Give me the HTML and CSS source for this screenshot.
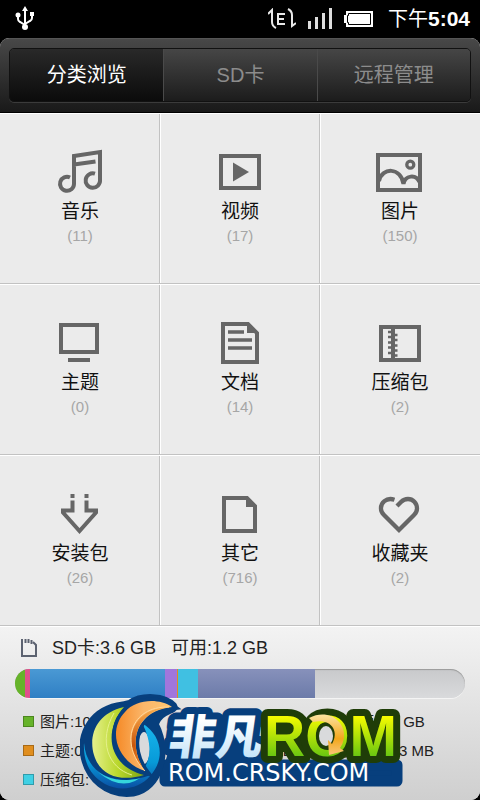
FILE: index.html
```html
<!DOCTYPE html>
<html lang="zh-CN">
<head>
<meta charset="utf-8">
<meta name="viewport" content="width=device-width, initial-scale=1">
<title>文件管理</title>
<link rel="stylesheet" href="styles.css">
</head>
<body>
<div class="status">
  <svg class="usb" width="20" height="26" viewBox="0 0 20 26" fill="none" stroke="#fff" stroke-width="2">
    <path d="M10 4V22M3 10V13Q3 15 5 16L10 19M17 9V12Q17 14 15 15L10 18"/>
    <path d="M10 0L13 5H7ZM15 6h4v4h-4Z" fill="#fff" stroke="none"/>
    <circle cx="3" cy="9" r="2.500" fill="#fff" stroke="none"/><circle cx="10" cy="21" r="3" fill="#fff" stroke="none"/>
  </svg>
  <div class="indicators">
    <svg width="28" height="22" viewBox="0 0 28 22" fill="none" stroke="#e8e8e8" stroke-width="2">
      <path d="M0 6L4 2V14Q4 18 8 20M20 1Q24 3 24 7V18L28 15"/><path d="M17 6H10V16H17M10 11H16"/>
    </svg>
    <svg class="signal" width="24" height="22" viewBox="0 0 24 22" fill="#ddd">
      <path d="M0 13h3v8H0ZM7 9h3v12H7ZM14 5h3v16h-3ZM21 0h3v21h-3Z"/>
    </svg>
    <svg class="battery" width="29" height="18" viewBox="0 0 29 18">
      <path d="M2 1H29V17H2V13H0V5H2Z" fill="#fff"/><path d="M4.500 3.500H26.500V14.500H4.500V12.500H3.500V5.500H4.500Z" fill="#fff" stroke="#000"/>
    </svg>
    <span class="clock">下午<b>5:04</b></span>
  </div>
</div>

<main class="screen">
  <nav class="top">
    <div class="tabs">
      <button class="tab active" type="button">分类浏览</button>
      <button class="tab" type="button">SD卡</button>
      <button class="tab" type="button">远程管理</button>
    </div>
  </nav>

  <section class="grid">
    <a class="cell" href="#music">
      <svg class="icon" viewBox="0 0 48 48"><path d="M14 29.500A7 7 0 1 0 18 36V8L44 4V32A7.200 7.200 0 1 1 39 25.700M18 16.500L39.500 13.500"/></svg>
      <span class="name">音乐</span><span class="count">(11)</span>
    </a>
    <a class="cell" href="#video">
      <svg class="icon" viewBox="0 0 48 48"><path d="M5 8H43V40H5Z"/><path class="solid" d="M17 14.500L33 24L17 33.500Z"/></svg>
      <span class="name">视频</span><span class="count">(17)</span>
    </a>
    <a class="cell" href="#pictures">
      <svg class="icon" viewBox="0 0 48 48"><path d="M2 7H44V42H2ZM3 33C6 19 25 19 27.500 36C29 27 40 26 43.500 34"/><circle cx="34.300" cy="16.700" r="3.500" stroke-width="3.300"/></svg>
      <span class="name">图片</span><span class="count">(150)</span>
    </a>
    <a class="cell" href="#themes">
      <svg class="icon" viewBox="0 0 48 48"><path d="M5 6H41V33H5ZM12 41H34"/></svg>
      <span class="name">主题</span><span class="count">(0)</span>
    </a>
    <a class="cell" href="#documents">
      <svg class="icon" viewBox="0 0 48 48"><path d="M7 5H32L41 14V43H7Z"/><path class="solid" d="M31 4V14H42Z"/><path d="M12 13H28M12 21H36M12 29H36" stroke-width="3.300"/></svg>
      <span class="name">文档</span><span class="count">(14)</span>
    </a>
    <a class="cell" href="#archives">
      <svg class="icon" viewBox="0 0 48 48"><path d="M5 8H43V41H5ZM17 8V41"/><path d="M12 13H17M12 18H17M12 23.500H17M12 28.500H17M12 34H17M17 16H21.500M17 21H21.500M17 26.500H21.500M17 31.500H21.500M17 36.500H21.500" stroke-width="2.400"/></svg>
      <span class="name">压缩包</span><span class="count">(2)</span>
    </a>
    <a class="cell" href="#packages">
      <svg class="icon" viewBox="0 0 48 48"><path d="M16.500 4V8M30.500 4V8M16.500 10.500V20.500H7V22.500L23.500 41L40 22.500V20.500H30.500V10.500"/></svg>
      <span class="name">安装包</span><span class="count">(26)</span>
    </a>
    <a class="cell" href="#others">
      <svg class="icon" viewBox="0 0 48 48"><path d="M8 8H31L39 16V41H8Z"/><path class="solid" d="M30 7V17H40Z"/></svg>
      <span class="name">其它</span><span class="count">(716)</span>
    </a>
    <a class="cell" href="#favorites">
      <svg class="icon" viewBox="0 0 48 48"><path d="M18.500 9.700C10 7 4.500 13 5 19Q5 22 8 25L23 40L38 25Q41 22 41 18.500C41 13 37 9 32 9Q28 9 25 12L21 16" stroke-width="4.300"/></svg>
      <span class="name">收藏夹</span><span class="count">(2)</span>
    </a>
  </section>

  <section class="storage">
    <div class="summary">
      <svg width="16" height="18" viewBox="0 0 16 18" fill="none" stroke="#5c6270" stroke-width="2"><path d="M1 0V17H15V6L12 3"/><path d="M4.500 0V4M7.500 0V4M10.500 1V5"/></svg>
      <span class="total">SD卡:3.6 GB</span><span>可用:1.2 GB</span>
    </div>
    <div class="bar">
      <i class="green" style="width:2.3%"></i><i class="pink" style="width:1.1%"></i><i class="blue" style="width:30%"></i><i class="purple" style="width:2.6%"></i><i class="orange" style="width:0.3%"></i><i class="cyan" style="width:4.4%"></i><i class="slate" style="width:26%"></i>
    </div>
    <ul class="legend">
      <li><i class="green"></i>图片:109 MB</li><li><i class="pink"></i>音乐:37.7 MB</li><li><i class="blue"></i>视频:1.1 GB</li>
      <li><i class="orange"></i>主题:0 KB</li><li><i class="purple"></i>安装包:129 MB</li><li><i class="slate"></i>文档:24.3 MB</li>
      <li><i class="cyan"></i>压缩包:</li>
    </ul>
    <svg class="brand" width="326" height="106" viewBox="80 694 326 106">
      <defs>
        <linearGradient id="lime" x1="0" y1="0" x2="0" y2="1"><stop offset="0.200" stop-color="#f4fb00"/><stop offset="0.850" stop-color="#62c312"/></linearGradient>
        <linearGradient id="ice" x1="0" y1="0" x2="0" y2="1"><stop offset="0.300" stop-color="#fff"/><stop offset="1" stop-color="#b5def8"/></linearGradient>
        <linearGradient id="leaf"><stop offset="0" stop-color="#e5f08c"/><stop offset="0.500" stop-color="#b9d72b"/><stop offset="1" stop-color="#7ba313"/></linearGradient>
        <linearGradient id="flame"><stop offset="0" stop-color="#f58a27"/><stop offset="0.500" stop-color="#fbb76b"/><stop offset="1" stop-color="#ffc56f"/></linearGradient>
        <linearGradient id="ember" x1="0" y1="0" x2="0" y2="1"><stop offset="0" stop-color="#fbb050"/><stop offset="0.600" stop-color="#c9560c"/><stop offset="1" stop-color="#f58a27"/></linearGradient>
        <linearGradient id="sea" x1="0" y1="0" x2="0" y2="1"><stop offset="0" stop-color="#19b6ee"/><stop offset="0.600" stop-color="#079ad8"/><stop offset="1" stop-color="#0a4fa4"/></linearGradient>
        <linearGradient id="arrow" x1="0" y1="0" x2="0" y2="1"><stop offset="0" stop-color="#fbe3a0"/><stop offset="0.600" stop-color="#f3a71b"/><stop offset="1" stop-color="#f8c779"/></linearGradient>
      </defs>
      <g fill="#073f7d" stroke="#073f7d" stroke-width="11" stroke-linejoin="round">
        <path d="M170 765L182 725H250L256 765H397V781H165V765Z"/>
        <path d="M123 707C92 711 84 735 85 750C88 779 110 794 133 791C157 787 168 753 153 724C157 712 167 710 172 707C164 698 142 697 131 705Z"/>
      </g>
      <g class="hanzi"><text x="167" y="754" transform="skewX(-8)" transform-origin="167 754">非凡</text></g>
      <ellipse cx="144" cy="748" rx="6" ry="16" fill="#d9dadc"/>
      <path d="M84 743C86 767 103 779 121 779C147 779 158 753 142 723C163 736 165 760 150 776C139 789 120 792 105 784C89 775 83 760 84 743Z" fill="url(#sea)"/>
      <path d="M98 772Q121 787 145 774Q124 794 98 772Z" fill="#35d6dc"/>
      <path d="M124 707C97 713 88 735 94 755C101 779 125 781 144 775C108 766 103 731 124 707Z" fill="url(#leaf)" stroke="#073f7d" stroke-width="4" paint-order="stroke"/>
      <path d="M114 713C98 741 108 768 132 775" fill="none" stroke="#e5f08c"/>
      <path d="M172 707C159 698 136 699 125 712C107 731 117 762 145 771C129 749 131 712 172 707Z" fill="url(#flame)" stroke="#073f7d" stroke-width="7" paint-order="stroke"/>
      <path d="M170 707C132 707 119 744 145 771C129 749 131 712 170 707Z" fill="url(#ember)"/>
      <path d="M169 707C130 706 119 744 145 771" fill="none" stroke="#ffd79b"/>
      <path d="M276 722H386V752H276Z" fill="#1f3d08"/>
      <text class="rom" x="264" y="756">ROM</text>
      <ellipse cx="326" cy="736" rx="7" ry="10" fill="#d9dadc"/>
      <path d="M309 718C328 708 346 721 344 738Q343 744 340 748L344 751L329 755L328 740L332 744C340 730 330 718 313 722Z" fill="url(#arrow)"/>
      <text class="site" x="168" y="781">ROM.CRSKY.COM</text>
    </svg>
  </section>
</main>
</body>
</html>
```
FILE: styles.css
```css
* { box-sizing: border-box; }
body {
  margin: 0;
  min-height: 100vh;
  display: flex;
  flex-direction: column;
  background: #000;
  color: #222;
  font-family: "Liberation Sans", "Noto Sans CJK SC", sans-serif;
}
.status {
  height: 38px;
  padding: 0 10px 0 15px;
  display: flex;
  align-items: center;
  justify-content: space-between;
  color: #fff;
}
.indicators { display: flex; align-items: center; }
.signal { margin-left: 12px; }
.battery { margin-left: 12px; }
.clock { margin-left: 15px; font-size: 20px; line-height: 24px; }
.clock b { font-size: 21px; }

.screen {
  flex: 1;
  display: flex;
  flex-direction: column;
  border-radius: 9px;
  overflow: hidden;
  background: #ebebeb;
}
.top {
  padding: 9px 9px 10px;
  background: linear-gradient(#484848, #191919);
  border-top: 1px solid #555;
  border-bottom: 1px solid #000;
}
.tabs {
  height: 54px;
  display: grid;
  grid-template-columns: repeat(3, 1fr);
  border: 1px solid #111;
  border-radius: 5px;
  overflow: hidden;
  box-shadow: 0 1px 0 #3b3b3b;
}
.tab {
  border: 0;
  border-left: 1px solid #4a4a4a;
  padding: 0;
  background: linear-gradient(#464646, #1c1c1c);
  color: #8c8c8c;
  font: 20px/28px "Liberation Sans", "Noto Sans CJK SC", sans-serif;
}
.tab.active {
  border-left: 0;
  background: linear-gradient(#292929, #0b0b0b);
  color: #fff;
}

.grid {
  display: grid;
  grid-template-columns: repeat(3, 1fr);
}
.cell {
  height: 171px;
  padding-top: 34px;
  display: flex;
  flex-direction: column;
  align-items: center;
  border-top: 1px solid #fff;
  box-shadow: inset -1px -1px 0 #c2c2c2, inset 1px 0 0 #fff;
  color: #111;
  text-decoration: none;
}
.cell:nth-child(3n+1) { box-shadow: inset -1px -1px 0 #c2c2c2; }
.cell:nth-child(3n) { box-shadow: inset 0 -1px 0 #c2c2c2, inset 1px 0 0 #fff; }
.icon {
  width: 48px;
  height: 48px;
  margin-bottom: 2px;
  fill: none;
  stroke: #666;
  stroke-width: 4;
}
.icon .solid { fill: #666; stroke: none; }
.name { font-size: 19px; line-height: 28px; }
.count { font-size: 15px; line-height: 20px; color: #a6a6a6; }

.storage {
  position: relative;
  flex: 1;
  padding: 7px 15px 6px;
  border-top: 1px solid #fff;
  background: linear-gradient(#f3f3f3, #cfcfcf);
}
.summary {
  display: flex;
  align-items: center;
  padding-left: 6px;
  font-size: 18px;
  line-height: 28px;
}
.total { margin: 0 15px; }
.bar {
  height: 29px;
  margin-top: 7px;
  display: flex;
  border-radius: 15px;
  overflow: hidden;
  background: linear-gradient(#c8c9cb, #d9dadc);
  box-shadow: inset 0 1px 1px #999, 0 1px 0 #f4f4f4;
}
.green { background: #66b32a; }
.pink { background: #e0508c; }
.blue { background: linear-gradient(#4a99d4, #2f7fc4); }
.purple { background: #a176dc; }
.orange { background: #e08e1e; }
.cyan { background: #40d0e4; }
.slate { background: linear-gradient(#8791bb, #6c7ba9); }
.bar .cyan { background: #40c0e2; }

.legend {
  margin: 9px 0 0;
  padding: 0 0 0 8px;
  list-style: none;
  display: grid;
  grid-template-columns: 152px 152px 1fr;
  font-size: 15px;
  line-height: 29px;
  white-space: nowrap;
}
.legend li { display: flex; align-items: center; height: 29px; }
.legend i {
  width: 11px;
  height: 11px;
  margin-right: 6px;
  border: 1px solid rgba(0, 0, 0, 0.25);
}

.brand { position: absolute; left: 80px; top: 67px; }
.hanzi text {
  font: 900 47px "Noto Sans CJK SC", sans-serif;
  fill: url(#ice);
  stroke: #073f7d;
  stroke-width: 14px;
  stroke-linejoin: round;
  paint-order: stroke;
}
.rom {
  font: bold 57px "Liberation Sans", sans-serif;
  fill: url(#lime);
  stroke: #1f3d08;
  stroke-width: 14px;
  stroke-linejoin: round;
  paint-order: stroke;
}
.site {
  font: 24px "DejaVu Sans", sans-serif;
  fill: #fff;
}
```
